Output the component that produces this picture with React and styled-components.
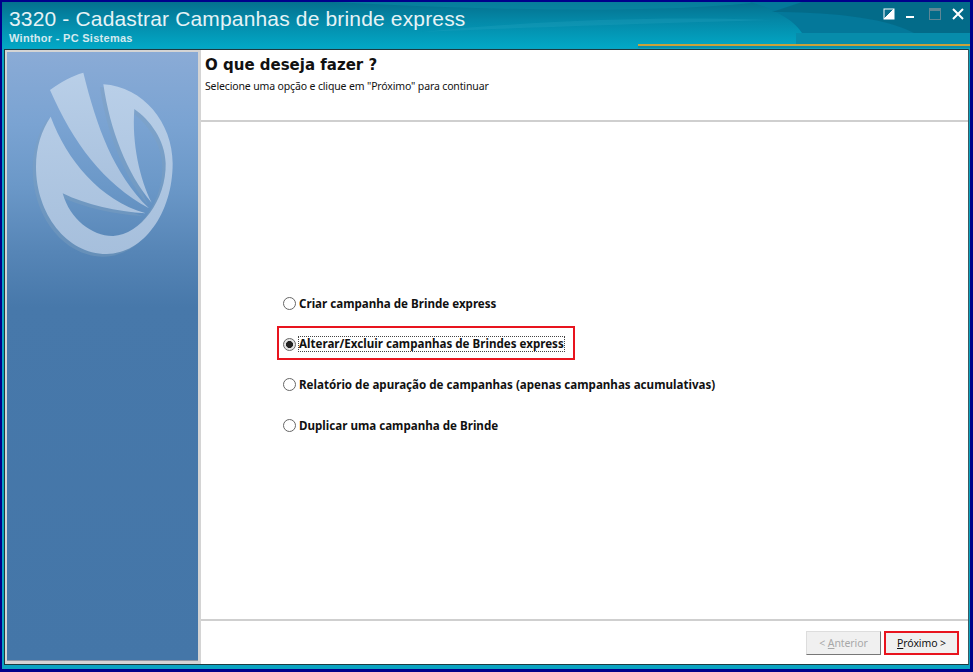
import React from "react";
import styled, { createGlobalStyle } from "styled-components";

const Global = createGlobalStyle`
  html, body { margin: 0; padding: 0; background: #000080; }
  #root { width: 973px; height: 672px; overflow: hidden; }
`;

const Frame = styled.div`
  box-sizing: border-box;
  width: 973px;
  height: 672px;
  border: solid #00008b;
  border-width: 2px 3px 3px 2px;
  background: #0aa3c2;
  display: flex;
  flex-direction: column;
`;

const TitleBar = styled.header`
  position: relative;
  height: 46px;
  flex: none;
  box-sizing: border-box;
  padding: 5px 0 0 7px;
  background: linear-gradient(180deg, #04708e 0%, #0488a7 40%, #02a8c6 100%);
  overflow: hidden;
  font-family: "Liberation Sans", Arial, sans-serif;
`;

const Waves = styled.svg`
  position: absolute;
  inset: 0;
`;

const Title = styled.h1`
  position: relative;
  margin: 0;
  font-size: 21px;
  line-height: 23px;
  font-weight: 400;
  letter-spacing: 0.16px;
  color: #e6f3f6;
`;

const Subtitle = styled.div`
  position: relative;
  margin-top: 2px;
  font-size: 11px;
  line-height: 12px;
  font-weight: 700;
  color: #d4eaef;
  letter-spacing: 0.28px;
`;

const WindowButtons = styled.div`
  position: absolute;
  top: 6px;
  right: 6px;
  display: flex;
  align-items: center;
  gap: 11px;
`;

const Client = styled.div`
  flex: 1;
  min-height: 0;
  margin: 1px 0 4px 2px;
  box-sizing: border-box;
  border: 1px solid #1c3a40;
  border-right-color: #3c5a60;
  background: #d4d4d4;
  display: flex;
  padding: 2px 0 3px 2px;
  width: 965px;
`;

const Side = styled.aside`
  position: relative;
  width: 191px;
  flex: none;
  background: linear-gradient(180deg, #8aabd6 0%, #7aa3d2 12%, #6b98c8 22%, #5685b6 33%, #4778aa 42%, #4476a8 100%);
  border-bottom: 1px solid #8b96a3;
  margin-right: 3px;
`;

const Logo = styled.svg`
  display: block;
  width: 191px;
  height: 240px;
`;

const Main = styled.main`
  flex: 1;
  min-width: 0;
  margin: -2px 0 -3px;
  background: #fff;
  display: flex;
  flex-direction: column;
  font-family: "Noto Sans", Tahoma, sans-serif;
  color: #111;
`;

const Header = styled.div`
  height: 72px;
  flex: none;
  box-sizing: border-box;
  padding: 5px 0 0 4px;
  border-bottom: 2px solid #cfcfcf;
`;

const Heading = styled.h2`
  margin: 0;
  font-family: "DejaVu Sans", Tahoma, sans-serif;
  font-size: 15px;
  line-height: 20px;
  font-weight: 700;
`;

const Hint = styled.p`
  margin: 5px 0 0;
  font-size: 10.5px;
  line-height: 13px;
  letter-spacing: -0.14px;
`;

const Body = styled.div`
  flex: 1;
  min-height: 0;
  box-sizing: border-box;
  padding: 175px 0 0 82px;
  display: flex;
  flex-direction: column;
  gap: 27.7px;
`;

const Option = styled.label`
  position: relative;
  display: flex;
  align-items: center;
  gap: 3px;
  height: 13px;
  font-family: "Noto Sans", Tahoma, sans-serif;
  font-size: 11.6px;
  font-weight: 700;
  white-space: nowrap;
  ${(p) =>
    p.$marked &&
    `&::after {
      content: "";
      position: absolute;
      left: -6px;
      top: -12px;
      width: 294px;
      height: 30px;
      border: 2px solid #e8141e;
    }`}
`;

const Radio = styled.span`
  box-sizing: border-box;
  width: 13px;
  height: 13px;
  flex: none;
  border-radius: 50%;
  border: 1px solid #666;
  background: ${(p) => (p.$checked ? "radial-gradient(circle, #222 0 3.2px, #e4e4e4 3.8px)" : "#fff")};
`;

const OptionText = styled.span`
  line-height: 14px;
  ${(p) => p.$focus && "outline: 1px dotted #444; outline-offset: 0;"}
`;

const Footer = styled.footer`
  height: 45px;
  flex: none;
  box-sizing: border-box;
  border-top: 2px solid #cfcfcf;
  display: flex;
  justify-content: flex-end;
  gap: 3px;
  padding: 10px 9px 0 0;
`;

const Button = styled.button`
  position: relative;
  box-sizing: border-box;
  width: 75px;
  height: 24px;
  padding: 0;
  border: 1px solid;
  border-color: #ddd #777 #777 #ddd;
  background: #f0f0f0;
  font-family: "Noto Sans", Tahoma, sans-serif;
  font-size: 10.5px;
  letter-spacing: -0.1px;
  color: ${(p) => (p.disabled ? "#a8a8a8" : "#111")};
  ${(p) =>
    p.$marked &&
    `&::after {
      content: "";
      position: absolute;
      inset: -1px;
      border: 2px solid #e8141e;
    }`}
  u { text-decoration: underline; }
`;

const options = [
  { text: "Criar campanha de Brinde express" },
  { text: "Alterar/Excluir campanhas de Brindes express", checked: true },
  { text: "Relatório de apuração de campanhas (apenas campanhas acumulativas)" },
  { text: "Duplicar uma campanha de Brinde" },
];

export default function App() {
  return (
    <>
      <Global />
      <Frame>
        <TitleBar>
          <Waves width="968" height="46" viewBox="0 0 968 46">
            <path d="M330 0C480 8 640 12 750 1L748 0Z" fill="#0a8aa8" opacity="0.5" />
            <path d="M420 30C540 18 660 14 770 18C700 20 560 24 420 30Z" fill="#2aa8c2" opacity="0.25" />
            <path d="M748 0C770 6 792 18 800 31V46H968V0Z" fill="#04789a" />
            <path d="M770 10C820 10 880 14 912 31H968V0H800Z" fill="#03627f" opacity="0.6" />
            <rect x="794" y="31" width="174" height="11" fill="#078cab" />
            <rect x="636" y="42" width="332" height="2" fill="#c9a23a" />
            <rect x="636" y="44" width="332" height="2" fill="#0a90ad" />
          </Waves>
          <Title>3320 - Cadastrar Campanhas de brinde express</Title>
          <Subtitle>Winthor - PC Sistemas</Subtitle>
          <WindowButtons>
            <svg width="12" height="12" viewBox="0 0 12 12">
              <rect x="0.5" y="0.5" width="11" height="11" fill="#fff" />
              <path d="M1.5 10.5V1.5H10.5Z" fill="#0b6f8c" />
              <path d="M11 1 1 11" stroke="#fff" />
            </svg>
            <svg width="8" height="12" viewBox="0 0 8 12">
              <rect x="0" y="8" width="8" height="2" fill="#fff" />
            </svg>
            <svg width="12" height="12" viewBox="0 0 12 12" style={{ marginLeft: 4 }}>
              <rect x="0.5" y="0.5" width="11" height="11" fill="none" stroke="#5d8796" />
              <rect x="0.5" y="0.5" width="11" height="2.5" fill="#5d8796" />
            </svg>
            <svg width="12" height="12" viewBox="0 0 12 12">
              <path d="M1 1 11 11M11 1 1 11" stroke="#fff" strokeWidth="2" />
            </svg>
          </WindowButtons>
        </TitleBar>
        <Client>
          <Side>
            <Logo viewBox="21 6 573 720">
              <defs>
                <linearGradient id="lg" x1="0" y1="0" x2="0" y2="1">
                  <stop offset="0" stopColor="#b9cfe8" />
                  <stop offset="1" stopColor="#a6bfdc" />
                </linearGradient>
              </defs>
              <g fill="#7f9fbe" opacity="0.4" transform="translate(-10 8)">
                <path d="M310 103C430 110 518 220 518 340C518 490 430 612 320 612C200 612 108 490 108 350C108 290 125 240 152 200C200 330 300 450 437 490C350 485 260 465 188 430C210 510 280 560 340 558C420 555 500 450 497 340C495 270 450 210 403 177C395 280 420 390 455 458C380 370 330 240 310 103Z" />
              </g>
              <g fill="url(#lg)">
                <path d="M150 120C185 95 215 78 250 68C290 230 340 370 447 475C310 400 220 280 150 120Z" />
                <path d="M310 103C430 110 518 220 518 340C518 490 430 612 320 612C200 612 108 490 108 350C108 290 125 240 152 200C200 330 300 450 437 490C350 485 260 465 188 430C210 510 280 560 340 558C420 555 500 450 497 340C495 270 450 210 403 177C395 280 420 390 455 458C380 370 330 240 310 103Z" />
              </g>
            </Logo>
          </Side>
          <Main>
            <Header>
              <Heading>O que deseja fazer ?</Heading>
              <Hint>Selecione uma opção e clique em "Próximo" para continuar</Hint>
            </Header>
            <Body>
              {options.map((o) => (
                <Option key={o.text} $marked={o.checked}>
                  <Radio $checked={o.checked} />
                  <OptionText $focus={o.checked}>{o.text}</OptionText>
                </Option>
              ))}
            </Body>
            <Footer>
              <Button disabled>&lt; <u>A</u>nterior</Button>
              <Button $marked><u>P</u>róximo &gt;</Button>
            </Footer>
          </Main>
        </Client>
      </Frame>
    </>
  );
}
